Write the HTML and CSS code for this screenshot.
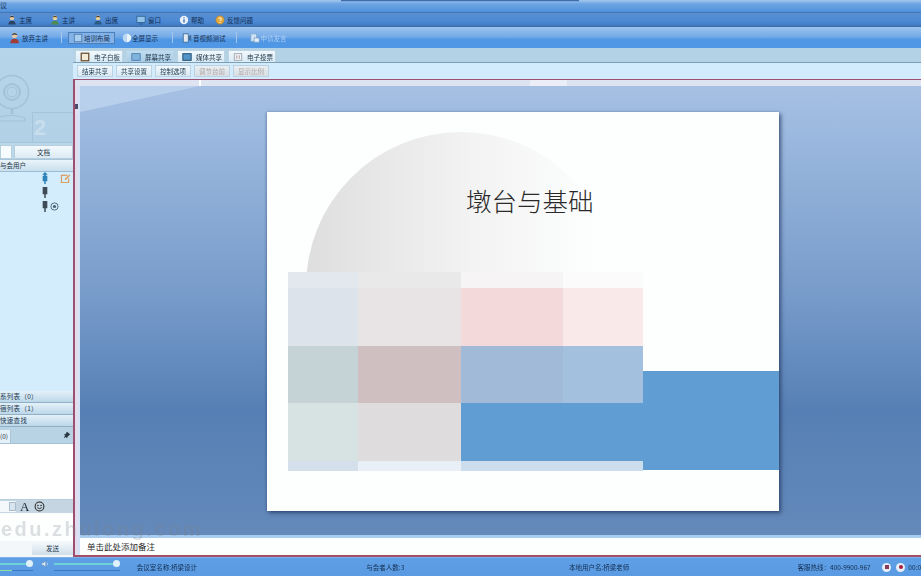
FILE: index.html
```html
<!DOCTYPE html>
<html lang="zh">
<head>
<meta charset="utf-8">
<title>培训</title>
<link rel="stylesheet" href="styles.css">
</head>
<body>
<div class="app">
  <header class="titlebar"><span class="title-text">议</span><div class="title-notch"></div></header>
  <nav class="menubar">
    <span class="menu-item m1"><svg class="ic" viewBox="0 0 12 12"><circle cx="6" cy="3.500" r="2.800" fill="#e8c9a4"/><path d="M3.200 3.200C3.300.4 8.700.4 8.800 3.200 7 2.200 5 2.200 3.200 3.200z" fill="#24303c"/><path d="M1.500 11.500c.4-3.600 2-4.500 4.500-4.500s4.100.9 4.500 4.500z" fill="#2c4360"/></svg>主席</span>
    <span class="menu-item m2"><svg class="ic" viewBox="0 0 12 12"><circle cx="6" cy="3.500" r="2.800" fill="#ecd0a0"/><path d="M3.200 3.200C3.300.4 8.700.4 8.800 3.200 7 2.200 5 2.200 3.200 3.200z" fill="#4a4426"/><path d="M1.500 11.500c.4-3.600 2-4.500 4.500-4.500s4.100.9 4.500 4.500z" fill="#4f8a52"/></svg>主讲</span>
    <span class="menu-item m3"><svg class="ic" viewBox="0 0 12 12"><circle cx="6" cy="3.500" r="2.800" fill="#ecd0a0"/><path d="M3.200 3.200C3.300.4 8.700.4 8.800 3.200 7 2.200 5 2.200 3.200 3.200z" fill="#3a3a2c"/><path d="M1.500 11.500c.4-3.600 2-4.500 4.500-4.500s4.100.9 4.500 4.500z" fill="#2a5a82"/></svg>出席</span>
    <span class="menu-item m4"><svg class="ic" viewBox="0 0 12 12"><rect x="1" y="1.500" width="10" height="7.500" fill="#8fc3ea" stroke="#2d5f8f"/><path d="M3.500 10.800h5" stroke="#2d5f8f" stroke-width="1.200"/></svg>窗口</span>
    <span class="menu-item m5"><svg class="ic" viewBox="0 0 12 12"><circle cx="6" cy="6" r="5" fill="#e9f2fb"/><path d="M6 5v4M6 2.800v1.200" stroke="#2d5f9f" stroke-width="1.500"/></svg>帮助</span>
    <span class="menu-item m6"><svg class="ic" viewBox="0 0 12 12"><circle cx="6" cy="6" r="5" fill="#e6a93c" stroke="#a87a26" stroke-width=".6"/><path d="M4.400 4.600c.2-1.700 3.400-1.700 3.300.2 0 1.200-1.700 1.200-1.700 2.600M6 8.500v1.200" fill="none" stroke="#fff" stroke-width="1"/></svg>反馈问题</span>
  </nav>
  <div class="toolbar">
    <span class="tool t1"><svg class="ic ic-lg" viewBox="0 0 14 14"><circle cx="6.500" cy="4" r="3" fill="#e8c9a4"/><path d="M3.500 3.700C3.600.6 9.400.6 9.500 3.700 7.500 2.700 5.500 2.700 3.500 3.700z" fill="#24303c"/><path d="M1.500 13c.4-4 2.300-5 5-5s4.600 1 5 5z" fill="#a33c34"/></svg>放弃主讲</span>
    <i class="sep s1"></i>
    <span class="tool t2 is-on"><svg class="ic" viewBox="0 0 12 12"><rect x="1.500" y="1.500" width="9" height="9" fill="#a9cdee" stroke="#4a79a8"/></svg>培训布局</span>
    <span class="tool t3"><svg class="ic" viewBox="0 0 12 12"><circle cx="6" cy="6" r="5" fill="#e9f3fb"/><path d="M6 1a5 5 0 0 0 0 10z" fill="#bcd8f0"/></svg>全屏显示</span>
    <i class="sep s2"></i>
    <span class="tool t4"><svg class="ic" viewBox="0 0 12 12"><rect x="1.500" y="1" width="6" height="10" fill="#dfeaf5" stroke="#3d6a96"/><path d="M8 4l3-2v8l-3-2z" fill="#3d6a96"/></svg>音视频测试</span>
    <i class="sep s3"></i>
    <span class="tool t5 is-off"><svg class="ic" viewBox="0 0 12 12"><rect x="1" y="1" width="7" height="9" fill="#cfe3f6" stroke="#7fa5cb"/><rect x="5" y="6" width="6" height="5" fill="#e6f1fb" stroke="#7fa5cb"/></svg>申请发言</span>
  </div>
  <main class="workspace">
    <aside class="side">
      <div class="cam">
        <svg class="cam-art" viewBox="0 0 73 95"><g fill="none" stroke="#a3c2d7"><circle cx="12" cy="44" r="16.500" stroke-width="1.500"/><circle cx="12" cy="44" r="8" stroke-width="2"/><circle cx="12" cy="44" r="5" stroke-width="1"/><path d="M12 61v5" stroke-width="3"/><path d="M-4 70q16-5 29 0v3H-4z" stroke-width="1.200"/></g><rect x="32.500" y="64.500" width="41" height="30" fill="none" stroke="#a5c4d9"/><text x="34" y="87" class="cam-num">2</text></svg>
      </div>
      <div class="side-tabs"><span class="side-tab first"></span><span class="side-tab">文档</span></div>
      <div class="side-head">与会用户</div>
      <div class="users">
        <div class="user-row"><svg class="mic" viewBox="0 0 8 14"><path d="M4 0l3 3H5v1h1.500v6H4.800v3H3.200v-3H1.500V4H3V3H1z" fill="#2f82b8"/></svg><svg class="pen" viewBox="0 0 12 12"><path d="M1 2h7v1H2v7h7V6h1v5H1z" fill="#d98a3c"/><path d="M5 8l.6-2L10 1.500 11.200 2.800 6.800 7.300z" fill="#e0a060"/></svg></div>
        <div class="user-row"><svg class="mic" viewBox="0 0 8 14"><path d="M1.500 1h5v8h-1.700v4H3.200V9H1.500z" fill="#3f4c55"/></svg></div>
        <div class="user-row"><svg class="mic" viewBox="0 0 8 14"><path d="M1.500 1h5v8h-1.700v4H3.200V9H1.500z" fill="#3f4c55"/></svg><svg class="cam-mini" viewBox="0 0 10 10"><circle cx="5" cy="5" r="4" fill="none" stroke="#47606f"/><circle cx="5" cy="5" r="1.800" fill="#47606f"/></svg></div>
      </div>
      <div class="acc">系列表（0）</div>
      <div class="acc">宿列表（1）</div>
      <div class="acc">快速查找</div>
      <div class="chat-tabs"><span class="chat-tab">(0)</span><svg class="pin" viewBox="0 0 10 10"><path d="M5 1l4 3-3 3-1 2-1.500-1.500L1 9l1.500-3.500L1 4l2 0z" fill="#2a3844"/></svg></div>
      <div class="chat-log"></div>
      <div class="chat-tools"><span class="combo"><i class="combo-btn"></i></span><span class="font-a">A</span><svg class="smile" viewBox="0 0 12 12"><circle cx="6" cy="6" r="4.800" fill="none" stroke="#222" stroke-width="1.100"/><circle cx="4.300" cy="4.800" r=".8" fill="#222"/><circle cx="7.700" cy="4.800" r=".8" fill="#222"/><path d="M3.500 7.200q2.500 2.300 5 0" fill="none" stroke="#222"/></svg></div>
      <div class="chat-input"></div>
      <div class="chat-send"><span class="send-btn">发送</span></div>
    </aside>
    <section class="content">
      <div class="tabs">
        <span class="tab"><svg class="tab-ic" viewBox="0 0 12 12"><rect x="1.500" y="1.500" width="9" height="9" fill="#f3ead8" stroke="#6b4a2e" stroke-width="1.500"/></svg>电子白板</span>
        <span class="tab is-active"><svg class="tab-ic" viewBox="0 0 12 12"><rect x="1" y="2" width="10" height="8" fill="#7fb3de" stroke="#4b7aa6"/></svg>屏幕共享</span>
        <span class="tab"><svg class="tab-ic" viewBox="0 0 12 12"><rect x="1" y="2" width="10" height="8" fill="#4f93c7" stroke="#264f70" stroke-width="1.200"/></svg>媒体共享</span>
        <span class="tab"><svg class="tab-ic" viewBox="0 0 12 12"><rect x="1.500" y="2" width="9" height="8" fill="#eef3f8" stroke="#9a9fa8"/><path d="M4.500 4v4M7.500 4v4" stroke="#a88"/></svg>电子投票</span>
      </div>
      <div class="subtabs">
        <span class="sub">结束共享</span><span class="sub">共享设置</span><span class="sub">控制选项</span><span class="sub off">调节台前</span><span class="sub off">显示比例</span>
      </div>
      <div class="stage">
        <div class="ruler"></div>
        <div class="stage-body">
          <div class="gutter"><i class="gutter-mark"></i></div>
          <div class="canvas">
            <svg class="sheen" viewBox="0 0 120 26"><path d="M0 0H120L0 26z" fill="#b9d0ec"/></svg>
            <div class="slide">
              <div class="arc"></div>
              <h1 class="slide-title">墩台与基础</h1>
              <div class="blocks">
                <i class="b a1"></i><i class="b a2"></i><i class="b a3"></i><i class="b a4"></i>
                <i class="b b1"></i><i class="b b2"></i><i class="b b3"></i><i class="b b4"></i>
                <i class="b c1"></i><i class="b c2"></i><i class="b c3"></i><i class="b c4"></i>
                <i class="b d1"></i><i class="b d2"></i><i class="b d3"></i><i class="b d3"></i>
                <i class="b e1"></i><i class="b e2"></i><i class="b e3"></i><i class="b e3"></i>
              </div>
              <div class="bar"></div>
            </div>
          </div>
          <div class="notes">单击此处添加备注</div>
        </div>
      </div>
    </section>
    <div class="watermark">edu.zhulong.com</div>
  </main>
  <footer class="status">
    <div class="sliders">
      <span class="slider short"><i class="knob"></i></span>
      <svg class="speaker" viewBox="0 0 12 12"><path d="M1 4h3l3-3v10L4 8H1z" fill="#d6e6f5" stroke="#55789a" stroke-width=".6"/><path d="M9 4q1.500 2 0 4" fill="none" stroke="#d6e6f5"/></svg>
      <span class="slider long"><i class="knob"></i></span>
    </div>
    <span class="st-a">会议室名称:桥梁设计</span>
    <span class="st-b">与会者人数:3</span>
    <span class="st-c">本地用户名:桥梁老师</span>
    <span class="st-d">客服热线：400-9900-967</span>
    <span class="rec"><i class="rec-dot sq"></i><i class="rec-dot rd"></i></span>
    <span class="st-e">00:0</span>
  </footer>
</div>
</body>
</html>
```

FILE: styles.css
```css
* { box-sizing: border-box; }
html, body { margin: 0; padding: 0; width: 921px; height: 576px; overflow: hidden; background: #5a9ae2; }
body { font-family: "Noto Sans CJK SC", "Liberation Sans", sans-serif; font-size: 6.5px; color: #2a4a6a; }
svg { display: block; flex: none; }
i { display: block; font-style: normal; }
.app { width: 921px; height: 576px; display: flex; flex-direction: column; position: relative; overflow: hidden; filter: blur(.35px); }

.titlebar { height: 12px; flex: none; background: linear-gradient(#a5c8ee, #6fa6e4 30%, #4f90dc); position: relative; line-height: 10px; color: #1c3854; }
.title-text { display: block; font-size: 7px; }
.title-notch { position: absolute; left: 341px; top: 0; width: 238px; height: 2px; background: #3d6fae; border-bottom: 1px solid #7fa7da; }

.menubar { height: 15px; flex: none; background: linear-gradient(#5a8fd0, #4a88d4 70%, #3f78bb); border-top: 1px solid #4376b5; border-bottom: 1px solid #3e6ea8; display: flex; align-items: center; color: #122c4e; }
.menu-item { display: flex; align-items: center; gap: 2px; white-space: nowrap; }
.ic { width: 10px; height: 10px; }
.ic-lg { width: 12px; height: 12px; }
.m1 { margin-left: 7px; }
.m2, .m3, .m4, .m5 { margin-left: 18px; }
.m6 { margin-left: 11px; }

.toolbar { height: 21px; flex: none; background: linear-gradient(#9cc3ee, #76abe8 45%, #4f96e4 60%, #5097e6); display: flex; align-items: center; color: #132f52; }
.tool { display: flex; align-items: center; gap: 1px; white-space: nowrap; height: 13px; }
.t1 { margin-left: 9px; }
.s1 { margin-left: 13px; }
.t2 { margin-left: 6px; padding: 0 4px; }
.is-on { background: #82b2e8; border: 1px solid #4d7fb8; height: 12px; }
.t3 { margin-left: 7px; gap: 0; }
.s2 { margin-left: 14px; }
.t4 { margin-left: 9px; }
.s3 { margin-left: 10px; }
.t5 { margin-left: 13px; }
.tool.is-off { color: #a9ccf2; }
.sep { width: 1px; height: 11px; background: #a6c6ec; }

.workspace { flex: 1; min-height: 0; display: flex; position: relative; background: #b9d6e8; }
.side { width: 73px; flex: none; display: flex; flex-direction: column; background: #d5ecfb; overflow: hidden; }
.cam { height: 95px; flex: none; background: linear-gradient(#b6d5ea, #b2d1e6); border-bottom: 1px solid #a8c6da; }
.cam-art { width: 73px; height: 95px; }
.cam-num { font-family: "Liberation Sans", sans-serif; font-size: 22px; font-weight: 700; fill: #c8deec; }
.side-tabs { height: 17px; flex: none; display: flex; background: #bcd7e8; padding-top: 2px; border-bottom: 1px solid #a9c6d9; gap: 2px; }
.side-tab { height: 14px; line-height: 13px; text-align: center; background: linear-gradient(#f4fafe, #dceaf4); border: 1px solid #b6cfdf; color: #1e3342; }
.side-tab.first { width: 12px; background: #f6fbfe; }
.side-tab:not(.first) { flex: 1; }
.side-head { height: 12px; flex: none; line-height: 11px; background: linear-gradient(#eaf4fb, #c9dfee); border-bottom: 1px solid #9cbcd2; color: #1e3342; }
.users { flex: 1; min-height: 0; background: #d4edfd; }
.user-row { height: 14px; display: flex; align-items: flex-start; justify-content: flex-end; position: relative; }
.mic { width: 8px; height: 13px; margin-right: 24px; }
.pen { width: 11px; height: 11px; position: absolute; right: 2px; top: 1px; }
.cam-mini { width: 9px; height: 9px; position: absolute; right: 14px; top: 2px; }
.acc { height: 12px; flex: none; line-height: 11px; background: linear-gradient(#e4f1f9, #bcd7e8); border-bottom: 1px solid #8fb0c6; color: #1e3a50; letter-spacing: .3px; white-space: nowrap; }
.chat-tabs { height: 17px; flex: none; background: #b8d3e4; display: flex; justify-content: space-between; align-items: flex-end; padding-right: 2px; border-bottom: 1px solid #a5c1d4; }
.chat-tab { width: 11px; height: 13px; background: #e4f1f9; border-right: 1px solid #a8c4d6; line-height: 12px; color: #1e3342; }
.pin { width: 8px; height: 8px; margin-bottom: 4px; }
.chat-log { height: 56px; flex: none; background: #fff; border-bottom: 1px solid #b6cfdf; }
.chat-tools { height: 13px; flex: none; background: #c5d6e2; display: flex; align-items: center; }
.combo { width: 16px; height: 11px; background: #f4f8fb; display: flex; justify-content: flex-end; }
.combo-btn { width: 7px; height: 9px; margin-top: 1px; background: #d8e4ee; border: 1px solid #a9bccb; }
.font-a { font-family: "Liberation Serif", serif; font-size: 13px; line-height: 13px; color: #1a2530; margin-left: 4px; width: 9px; }
.smile { width: 11px; height: 11px; margin-left: 5px; }
.chat-input { height: 28px; flex: none; background: #fdfefe; }
.chat-send { height: 16px; flex: none; background: #f3f7fa; display: flex; justify-content: flex-end; align-items: flex-start; }
.send-btn { width: 41px; height: 12px; margin-top: 2px; line-height: 11px; text-align: center; background: linear-gradient(#f2f7fb, #cfdee9); color: #1e3a50; }

.content { flex: 1; min-width: 0; display: flex; flex-direction: column; }
.tabs { height: 15px; flex: none; display: flex; gap: 3px; background: #b3d2e6; padding-left: 2px; align-items: flex-end; border-bottom: 1px solid #7d9fb5; }
.tab { width: 48px; height: 12px; display: flex; align-items: center; gap: 4px; padding: 0 2px 0 4px; background: linear-gradient(#f0f8fd, #d9ebf6); border: 1px solid #bcd3e2; border-bottom: 0; color: #1e3242; white-space: nowrap; }
.tab.is-active { background: linear-gradient(#bfdcf0, #a9cde6); }
.tab-ic { width: 10px; height: 10px; }
.subtabs { height: 16px; flex: none; display: flex; align-items: center; gap: 3px; padding-left: 4px; background: #d2ebfd; }
.sub { width: 36px; height: 12px; line-height: 11px; text-align: center; background: linear-gradient(#f2f9fd, #d9e8f2); border: 1px solid #bdd2e0; color: #1e3a4c; white-space: nowrap; }
.sub.off { color: #b3a8a4; background: linear-gradient(#e8eef2, #d8dfe4); }

.stage { flex: 1; min-height: 0; display: flex; flex-direction: column; border: 2px solid #9c4f6e; border-top-width: 1px; border-bottom-color: #a44f68; border-right: 0; background: #fff; }
.ruler { height: 6px; flex: none; background:
  linear-gradient(90deg, transparent 124px, #fff 124px, #fff 126px, transparent 126px, transparent 455px, #ebeef6 455px, #ebeef6 492px, transparent 492px),
  #dde3f0; }
.stage-body { flex: 1; min-height: 0; display: flex; flex-direction: column; position: relative; padding-left: 5px; background: #c9dcf2; }
.gutter { position: absolute; left: 0; top: 0; bottom: 0; width: 5px; background: linear-gradient(90deg, #e3dcec 60%, #d2e3f7 60%); }
.gutter-mark { position: absolute; left: 0; top: 18px; width: 3px; height: 5px; background: #4a4a6a; }
.canvas { flex: 1; min-height: 0; position: relative; overflow: hidden; background: linear-gradient(#a6c0e3 0, #9ab8de 12%, #769ac9 48%, #5680b5 72%, #6489ba 100%); }
.sheen { position: absolute; left: 0; top: 0; width: 120px; height: 26px; }
.slide { position: absolute; left: 187px; top: 26px; width: 512px; height: 399px; background: #fdfefe; box-shadow: 2px 2px 4px rgba(30, 50, 90, .7), -1px 0 2px rgba(40, 70, 120, .3); overflow: hidden; }
.arc { position: absolute; left: 39px; top: 20px; width: 310px; height: 310px; border-radius: 50%; background: linear-gradient(90deg, #dedede 0, #e8e8e8 25%, #f3f3f3 55%, #fdfefe 95%); }
.slide-title { position: absolute; left: 199px; top: 70px; margin: 0; font-family: "Noto Sans CJK SC", serif; font-weight: 300; font-size: 25.500px; line-height: 36px; color: #2a2a2a; white-space: nowrap; }
.blocks { position: absolute; left: 21px; top: 160px; width: 355px; height: 199px; display: grid; grid-template-columns: 70px 103px 102px 80px; grid-template-rows: 16px 58px 57px 58px 10px; background: #fff; }
.a1 { background: #e3e8ee; } .a2 { background: #e9e9ea; } .a3 { background: #f6f4f4; } .a4 { background: #fcfbfb; }
.b1 { background: #dde3ea; } .b2 { background: #e8e3e4; } .b3 { background: #f3d9da; } .b4 { background: #f9e9e9; }
.c1 { background: #c6d3d6; } .c2 { background: #cfbfc0; } .c3 { background: #a0bad8; } .c4 { background: #a3c1de; }
.d1 { background: #d7e3e3; } .d2 { background: #dfdcde; } .d3 { background: #5f9dd3; }
.e1 { background: #d3e0ec; } .e2 { background: #e8eff6; } .e3 { background: #ccdded; }
.bar { position: absolute; left: 376px; top: 259px; width: 136px; height: 99px; background: #5f9dd3; }
.notes { height: 20px; flex: none; background: #fdfefe; border-top: 3px solid #a9cdf0; font-size: 8.500px; line-height: 17px; padding-left: 7px; color: #2b2b2b; }
.watermark { position: absolute; left: 1px; top: 470px; font-family: "Liberation Sans", sans-serif; font-weight: 700; font-size: 20px; letter-spacing: 2.500px; color: rgba(120, 130, 140, .25); white-space: nowrap; pointer-events: none; }

.status { height: 19px; flex: none; background: linear-gradient(#5f9fe6, #5a9ae2); border-top: 1px solid #7db0ea; display: flex; align-items: center; color: #132f52; white-space: nowrap; }
.sliders { display: flex; align-items: center; width: 137px; padding-bottom: 7px; }
.slider { display: block; height: 2px; background: #6fd0d8; position: relative; flex: none; }
.slider::after { content: ""; position: absolute; left: 0; right: 0; top: 7px; height: 1px; background: #3878c4; }
.short::after { background: linear-gradient(90deg, #8fe0a0 12px, #3878c4 12px); }
.slider .knob { position: absolute; right: 0; top: -3px; width: 7px; height: 7px; border-radius: 50%; background: #dff2fb; }
.short { width: 33px; }
.long { width: 66px; margin-left: 5px; }
.speaker { width: 8px; height: 8px; margin-left: 8px; }
.st-a { width: 230px; }
.st-b { width: 203px; }
.st-c { width: 229px; }
.st-d { width: 85px; }
.rec { display: flex; gap: 5px; width: 26px; }
.rec-dot { width: 9px; height: 9px; border-radius: 50%; background: #e6eef6; display: flex; align-items: center; justify-content: center; }
.rec-dot::after { content: ""; width: 4px; height: 4px; background: #8a3a5a; }
.rec-dot.rd::after { border-radius: 50%; background: #a81c40; }
```
